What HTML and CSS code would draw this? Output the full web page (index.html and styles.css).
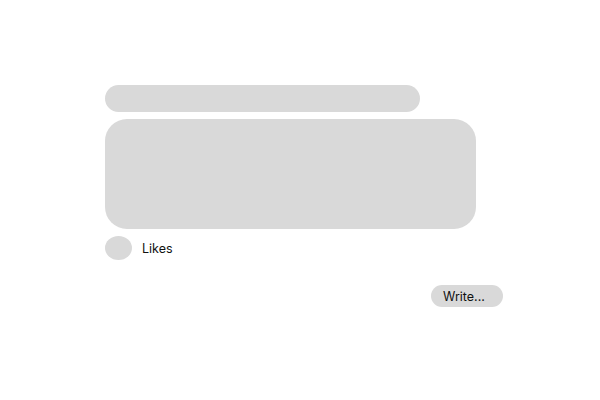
FILE: index.html
```html
<!DOCTYPE html>
<html>
<head>
<meta charset="utf-8">
<link rel="stylesheet" href="styles.css">
</head>
<body>
<div class="page">
  <div class="post">
    <div class="title-bar"></div>
    <div class="card"></div>
    <div class="likes-row">
      <div class="avatar"></div>
      <span class="likes">Likes</span>
    </div>
  </div>
  <div class="actions">
    <button class="write">Write...</button>
  </div>
</div>
</body>
</html>
```

FILE: styles.css
```css
html, body {
  margin: 0;
  padding: 0;
  background: #ffffff;
  font-family: Inter, "Noto Sans", sans-serif;
}
.page {
  width: 600px;
  height: 400px;
  padding: 85px 0 0 105px;
  box-sizing: border-box;
}
.post {
  width: 371px;
  display: flex;
  flex-direction: column;
}
.title-bar {
  width: 315px;
  height: 27px;
  border-radius: 14px;
  background: #d9d9d9;
}
.card {
  margin-top: 7px;
  height: 110px;
  border-radius: 22px;
  background: #d9d9d9;
}
.likes-row {
  margin-top: 7px;
  display: flex;
  align-items: center;
  gap: 10px;
}
.avatar {
  width: 27px;
  height: 24px;
  border-radius: 50%;
  background: #d9d9d9;
}
.likes {
  font-size: 12.5px;
  color: #111;
}
.actions {
  width: 398px;
  display: flex;
  justify-content: flex-end;
  margin-top: 25px;
}
.write {
  width: 72px;
  height: 22px;
  border: none;
  border-radius: 11px;
  background: #d9d9d9;
  font-family: Inter, "Noto Sans", sans-serif;
  font-size: 12.5px;
  color: #111;
  padding: 0 0 0 12px;
  text-align: left;
}
```
